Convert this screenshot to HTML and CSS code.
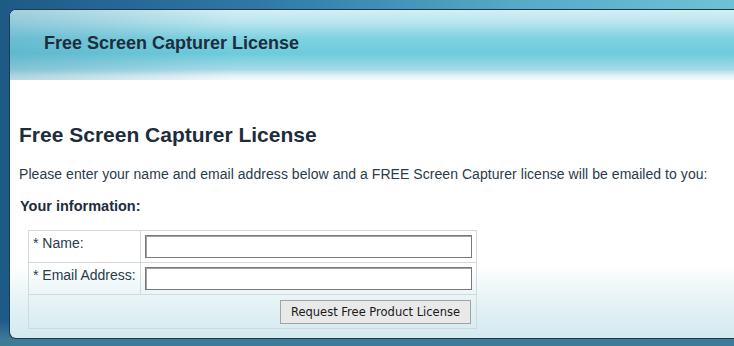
FILE: index.html
```html
<!DOCTYPE html>
<html lang="en">
<head>
  <meta charset="UTF-8">
  <title>Free Screen Capturer License</title>
  <link rel="stylesheet" href="styles.css">
</head>
<body>

  <div class="panel">
    <div class="panel-header">
      <div class="panel-title">Free Screen Capturer License</div>
    </div>

    <div class="panel-body">
      <h1>Free Screen Capturer License</h1>
      <p class="intro">Please enter your name and email address below and a FREE Screen Capturer license will be emailed to you:</p>
      <div class="section-label">Your information:</div>

      <form class="license-form">
        <table class="form-table">
          <tr>
            <td class="label-cell">* Name:</td>
            <td class="field-cell"><input type="text" class="text-input"></td>
          </tr>
          <tr>
            <td class="label-cell">* Email Address:</td>
            <td class="field-cell"><input type="text" class="text-input"></td>
          </tr>
          <tr>
            <td colspan="2" class="button-cell">
              <button type="button" class="submit-btn">Request Free Product License</button>
            </td>
          </tr>
        </table>
      </form>
    </div>
  </div>

</body>
</html>
```

FILE: styles.css
```css
* {
  box-sizing: border-box;
}

html, body {
  height: 100%;
}

body {
  margin: 0;
  overflow: hidden;
  font-family: "Liberation Sans", Arial, sans-serif;
  color: #2a3b4a;
  background:
    linear-gradient(to bottom, rgba(63, 123, 150, 0) 0, rgba(63, 123, 150, 0) 320px, #3f7b96 340px),
    linear-gradient(to right, #1e5a86 0, #2f78a6 35%, #56a9c8 70%, #6fc2d6 100%);
}

.panel {
  margin: 9px 0 0 9px;
  width: calc(100% + 20px);
  height: 330px;
  border: 1px solid #1b3a52;
  border-right: none;
  border-radius: 7px 0 0 7px;
  overflow: hidden;
  background: linear-gradient(to bottom, #ffffff 0, #ffffff 255px, #e6f3f6 290px, #d3e9ef 328px);
}

.panel-header {
  height: 70px;
  display: flex;
  align-items: center;
  padding: 0 0 4px 34px;
  background:
    linear-gradient(to right, rgba(70, 150, 180, 0.35) 0, rgba(70, 150, 180, 0) 30%),
    linear-gradient(to bottom, #d4eff3 0, #b9e5ee 18%, #7fd2e2 40%, #6ccbdc 62%, #a6dbe6 85%, #e4f3f6 94%, #f4fafb 100%);
}

.panel-title {
  font-size: 18px;
  font-weight: bold;
  color: #1d2d3c;
}

.panel-body {
  padding: 0 9px;
}

h1 {
  margin: 42px 0 0;
  font-size: 21px;
  line-height: 25px;
  color: #1d2d3c;
}

.intro {
  margin: 18px 0 0;
  font-size: 14px;
  line-height: 18px;
  letter-spacing: 0.05px;
}

.section-label {
  margin: 14px 0 0 1px;
  font-size: 14.5px;
  line-height: 18px;
  font-weight: bold;
  color: #1d2d3c;
}

.license-form {
  margin: 15px 0 0 9px;
}

.form-table {
  border-collapse: collapse;
  border: 1px solid #d4d8da;
}

.form-table td {
  border: 1px solid #d4d8da;
  padding: 0;
  vertical-align: top;
}

.label-cell {
  width: 112px;
  height: 32px;
  padding: 4px 0 0 4px !important;
  font-size: 14px;
  line-height: 16px;
}

.field-cell {
  width: 336px;
  padding: 4px 4px 0 4px !important;
}

.text-input {
  display: block;
  width: 327px;
  height: 23px;
  margin: 0;
  border: 1px solid #7a7a7a;
  box-shadow: inset 1px 1px 0 #a0a0a0;
  background: #fff;
}

.button-cell {
  height: 34px;
  text-align: right;
  padding: 5px 5px 0 0 !important;
}

.submit-btn {
  width: 191px;
  height: 24px;
  margin: 0;
  padding: 0;
  font-family: "DejaVu Sans", Tahoma, sans-serif;
  font-size: 11.5px;
  color: #1a1a1a;
  background: #e9e9e9;
  border: 1px solid #a3a3a3;
  border-radius: 0;
}
```
